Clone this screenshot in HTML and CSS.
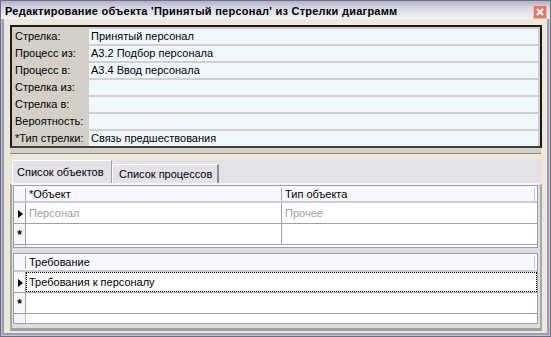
FILE: index.html
```html
<!DOCTYPE html>
<html lang="ru">
<head>
    <meta charset="UTF-8">
    <title>Редактирование объекта</title>
    <link rel="stylesheet" href="styles.css">
</head>
<body>

    <div class="window">
        <div class="titlebar">
            <span class="title">Редактирование объекта 'Принятый персонал' из Стрелки диаграмм</span>
            <svg class="close" width="14" height="14" viewBox="0 0 14 14">
                <rect x="0.5" y="0.5" width="13" height="13" fill="#e27563" stroke="#f4b9ae"/>
                <path d="M4 4 L10 10 M10 4 L4 10" stroke="#fff" stroke-width="2.2"/>
            </svg>
        </div>

        <div class="client">
            <div class="props">
                <div class="prop"><span class="prop-name">Стрелка:</span><span class="prop-value">Принятый персонал</span></div>
                <div class="prop"><span class="prop-name">Процесс из:</span><span class="prop-value">А3.2 Подбор персонала</span></div>
                <div class="prop"><span class="prop-name">Процесс в:</span><span class="prop-value">А3.4 Ввод персонала</span></div>
                <div class="prop"><span class="prop-name">Стрелка из:</span><span class="prop-value"></span></div>
                <div class="prop"><span class="prop-name">Стрелка в:</span><span class="prop-value"></span></div>
                <div class="prop"><span class="prop-name">Вероятность:</span><span class="prop-value"></span></div>
                <div class="prop"><span class="prop-name">*Тип стрелки:</span><span class="prop-value">Связь предшествования</span></div>
            </div>

            <div class="splitter"></div>

            <div class="tabs">
                <div class="tab-strip">
                    <div class="tab active">Список объектов</div>
                    <div class="tab">Список процессов</div>
                </div>
                <div class="tab-page">
                    <div class="grid grid-objects">
                        <div class="grid-head">
                            <div class="ind"></div>
                            <div class="hcell col-obj">*Объект</div>
                            <div class="hcell col-type">Тип объекта</div>
                        </div>
                        <div class="grid-row">
                            <div class="ind"><span class="arrow"></span></div>
                            <div class="cell col-obj muted">Персонал</div>
                            <div class="cell col-type muted">Прочее</div>
                        </div>
                        <div class="grid-row">
                            <div class="ind">*</div>
                            <div class="cell col-obj"></div>
                            <div class="cell col-type"></div>
                        </div>
                        <div class="grid-rest"></div>
                    </div>

                    <div class="grid grid-reqs">
                        <div class="grid-head">
                            <div class="ind"></div>
                            <div class="hcell col-req">Требование</div>
                        </div>
                        <div class="grid-row">
                            <div class="ind"><span class="arrow"></span></div>
                            <div class="cell col-req focused">Требования к персоналу</div>
                        </div>
                        <div class="grid-row">
                            <div class="ind">*</div>
                            <div class="cell col-req"></div>
                        </div>
                        <div class="grid-rest"></div>
                    </div>
                </div>
            </div>
        </div>
    </div>

</body>
</html>
```

FILE: styles.css
```css
body {
    margin: 0;
    font-family: "Liberation Sans", Arial, sans-serif;
    font-size: 11px;
    color: #000;
    background: #fff;
}
.window {
    width: 551px;
    height: 337px;
    box-sizing: border-box;
    border: 1px solid #6e6e88;
    display: flex;
    flex-direction: column;
    background: #ece9d8;
}
.titlebar {
    height: 21px;
    display: flex;
    align-items: center;
    justify-content: space-between;
    padding: 0 3px 0 4px;
    background: linear-gradient(#b2b2c8, #dcdce8 45%, #f2f2f6);
}
.title {
    font-weight: bold;
    font-size: 11px;
    letter-spacing: 0.25px;
    padding-top: 2px;
}
.close {
    display: block;
    margin-top: 4px;
}
.client {
    flex: 1;
    display: flex;
    flex-direction: column;
    padding: 6px 8px 5px 9px;
    box-shadow: inset 1px 0 #c4c4d4, inset -1px 0 #c4c4d4, inset 0 -1px #c4c4d4, inset 3px 0 #9c9cb4, inset -3px 0 #9c9cb4, inset 0 -3px #9c9cb4;
}

/* properties panel */
.props {
    border: 2px solid #1c1c1c;
    border-bottom-color: #404040;
    background: #d4d0c8;
    display: flex;
    flex-direction: column;
    padding: 2px 0 0;
}
.prop {
    display: flex;
    height: 17px;
}
.prop:last-child {
    height: 15px;
}
.prop-name {
    width: 74px;
    padding-left: 3px;
    line-height: 15px;
}
.prop-value {
    flex: 1;
    height: 15px;
    line-height: 15px;
    padding-left: 2px;
    margin-right: 2px;
    background: #f0f8ff;
}

.splitter {
    height: 5px;
    margin: 0 1px 6px 0;
    background: #d4d0c8;
    border-bottom: 1px solid #8a8a8a;
}

/* tabs */
.tabs {
    flex: 1;
    display: flex;
    flex-direction: column;
}
.tab-strip {
    height: 23px;
    display: flex;
    align-items: flex-end;
    padding-left: 2px;
    background: #e3e2e7;
    margin-right: 1px;
}
.tab {
    height: 19px;
    line-height: 18px;
    padding: 0 5px 0 6px;
    background: #e3e2e7;
    border-top: 1px solid #fff;
    border-left: 1px solid #fff;
    border-right: 2px solid #8e8e8e;
    box-sizing: border-box;
}
.tab.active {
    height: 24px;
    line-height: 22px;
    margin-bottom: -1px;
    padding: 0 5px 0 4px;
    border-right: 1px solid #a0a0a0;
    width: 100px;
}
.tab-page {
    flex: 1;
    display: flex;
    flex-direction: column;
    gap: 5px;
    padding: 0 2px 4px 1px;
    background: #dedde2;
    border-top: 2px solid #f6f6f6;
    border-left: 2px solid #a8a8a8;
    border-right: 2px solid #a8a8a8;
    border-bottom: 3px solid #a0a0a0;
}

/* grids */
.grid {
    display: flex;
    flex-direction: column;
    background: #fff;
    border: 1px solid #a0a0a0;
}
.grid-objects {
    height: 61px;
}
.grid-reqs {
    height: 69px;
}
.grid-head {
    display: flex;
    height: 15px;
    background: #f7f8fc;
    border-bottom: 2px solid #c8cadc;
}
.grid-reqs .grid-head {
    height: 16px;
}
.grid-head .ind {
    background: #f7f8fc;
    border-right: none;
}
.hcell {
    margin: 2px 0 0;
    padding-left: 3px;
    border-left: 1px solid #aaaab4;
    line-height: 13px;
    height: 13px;
}
.grid-row {
    display: flex;
    height: 20px;
    border-bottom: 1px solid #a0a0a0;
}
.grid-rest {
    flex: 1;
    display: flex;
}
.grid-rest::before {
    content: "";
    width: 11px;
    border-right: 1px solid #c0c0c8;
    background: #f4f4f8;
}
.ind {
    width: 11px;
    flex: none;
    border-right: 1px solid #a0a0a0;
    display: flex;
    align-items: center;
    justify-content: center;
    font-weight: bold;
    font-size: 12px;
    padding-top: 1px;
    box-sizing: content-box;
    background: #f7f7fa;
}
.arrow {
    width: 0;
    height: 0;
    border-left: 5px solid #000;
    border-top: 4.5px solid transparent;
    border-bottom: 4.5px solid transparent;
    margin-left: 1px;
}
.col-obj {
    width: 256px;
    flex: none;
    box-sizing: border-box;
}
.col-type {
    flex: 1;
}
.col-req {
    flex: 1;
}
.cell.col-obj {
    border-right: 1px solid #a0a0a0;
}
.cell {
    padding-left: 3px;
    line-height: 21px;
}
.hcell.col-type,
.hcell.col-req {
    margin-right: 2px;
    border-right: 1px solid #c8c8d0;
}
.muted {
    color: #a0a0a0;
}
.focused {
    outline: 1px dotted #000;
    outline-offset: -1px;
    line-height: 20px;
}
```
